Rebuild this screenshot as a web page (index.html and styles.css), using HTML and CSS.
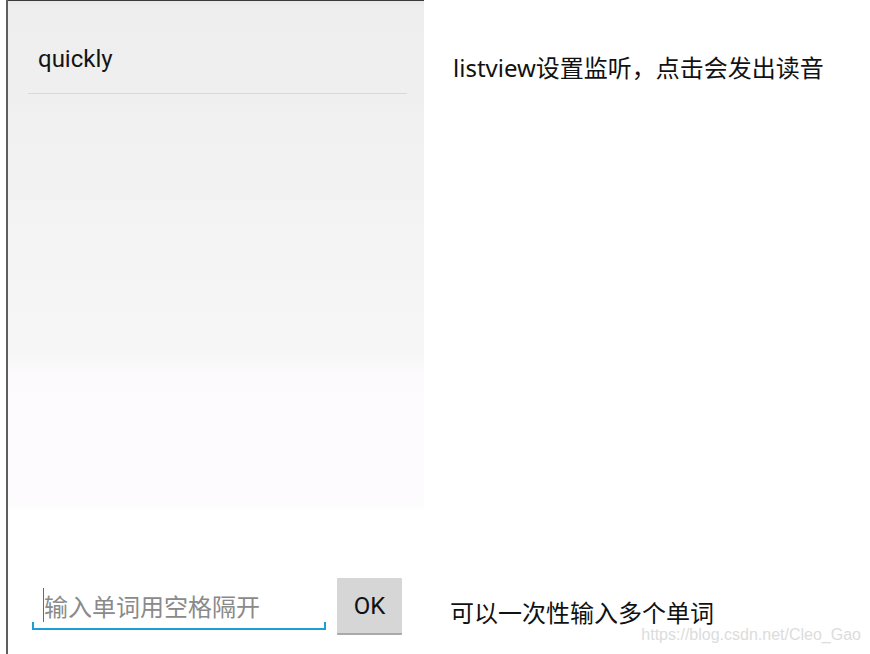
FILE: index.html
```html
<!DOCTYPE html>
<html lang="zh-CN">
<head>
<meta charset="utf-8">
<title>listview demo</title>
<link rel="stylesheet" href="styles.css">
</head>
<body>
<div class="page">
  <div class="phone">
    <div class="screen">
      <div class="list-item">quickly</div>
      <div class="divider"></div>
    </div>
    <div class="input-row">
      <div class="field">
        <span class="cursor"></span><span class="placeholder">输入单词用空格隔开</span>
      </div>
      <div class="btn">OK</div>
    </div>
  </div>
  <div class="notes">
    <div class="note note-top">listview设置监听，点击会发出读音</div>
    <div class="note note-bottom">可以一次性输入多个单词</div>
  </div>
  <div class="watermark">https://blog.csdn.net/Cleo_Gao</div>
</div>
</body>
</html>
```

FILE: styles.css
```css
html, body {
  margin: 0;
  padding: 0;
  background: #ffffff;
}

.page {
  position: relative;
  display: flex;
  width: 870px;
  height: 654px;
  padding-left: 6px;
  box-sizing: border-box;
  overflow: hidden;
}

.phone {
  width: 418px;
  height: 654px;
  border-left: 2px solid #5e5e5e;
  box-sizing: border-box;
  display: flex;
  flex-direction: column;
}

.screen {
  height: 510px;
  border-top: 1px solid #3c3c3c;
  box-sizing: border-box;
  background: linear-gradient(to bottom,
    #e9e9e9 0px,
    #eeeeee 6px,
    #efefef 90px,
    #f2f1f2 120px,
    #f5f5f5 300px,
    #f6f6f6 352px,
    #fcfafc 372px,
    #fdfbfd 420px,
    #fdfbfd 500px,
    #ffffff 510px);
}

.list-item {
  font-family: Roboto, "Noto Sans", sans-serif;
  font-size: 24px;
  line-height: 28px;
  color: #141414;
  padding: 44px 0 20px 30px;
}

.divider {
  height: 1px;
  background: #d9d9d9;
  margin: 0 17px 0 20px;
}

.input-row {
  display: flex;
  align-items: flex-start;
  gap: 11px;
  margin-top: 68px;
  padding-left: 24px;
}

.field {
  position: relative;
  width: 294px;
  height: 52px;
  box-sizing: border-box;
  border-bottom: 2px solid #1a9fd6;
  padding: 10px 0 0 11px;
  display: flex;
  align-items: flex-start;
}

.field::before,
.field::after {
  content: "";
  position: absolute;
  bottom: 0;
  width: 2px;
  height: 6px;
  background: #1a9fd6;
}

.field::before { left: 0; }
.field::after { right: 0; }

.cursor {
  width: 1px;
  height: 34px;
  background: #6a6a6a;
}

.placeholder {
  font-family: Roboto, "Noto Sans CJK SC", sans-serif;
  font-size: 24px;
  line-height: 34px;
  margin-top: 3px;
  color: #8a8a8a;
}

.btn {
  width: 65px;
  height: 57px;
  box-sizing: border-box;
  background: #d6d6d6;
  border-bottom: 2px solid #a9a9a9;
  border-radius: 1px;
  display: flex;
  align-items: center;
  justify-content: center;
  font-family: Roboto, "Noto Sans", sans-serif;
  font-size: 24px;
  color: #111111;
}

.notes {
  flex: 1;
  display: flex;
  flex-direction: column;
  padding: 52px 0 25px 29px;
}

.note {
  font-family: "Noto Sans", "Noto Sans CJK SC", sans-serif;
  font-size: 24px;
  line-height: 32px;
  color: #111111;
  white-space: nowrap;
}

.note-bottom {
  margin-top: auto;
  margin-left: -3px;
}

.watermark {
  position: absolute;
  right: 9px;
  top: 626px;
  font-family: "Liberation Sans", Arial, sans-serif;
  font-size: 16px;
  line-height: 18px;
  color: #dcdcdc;
}
```
